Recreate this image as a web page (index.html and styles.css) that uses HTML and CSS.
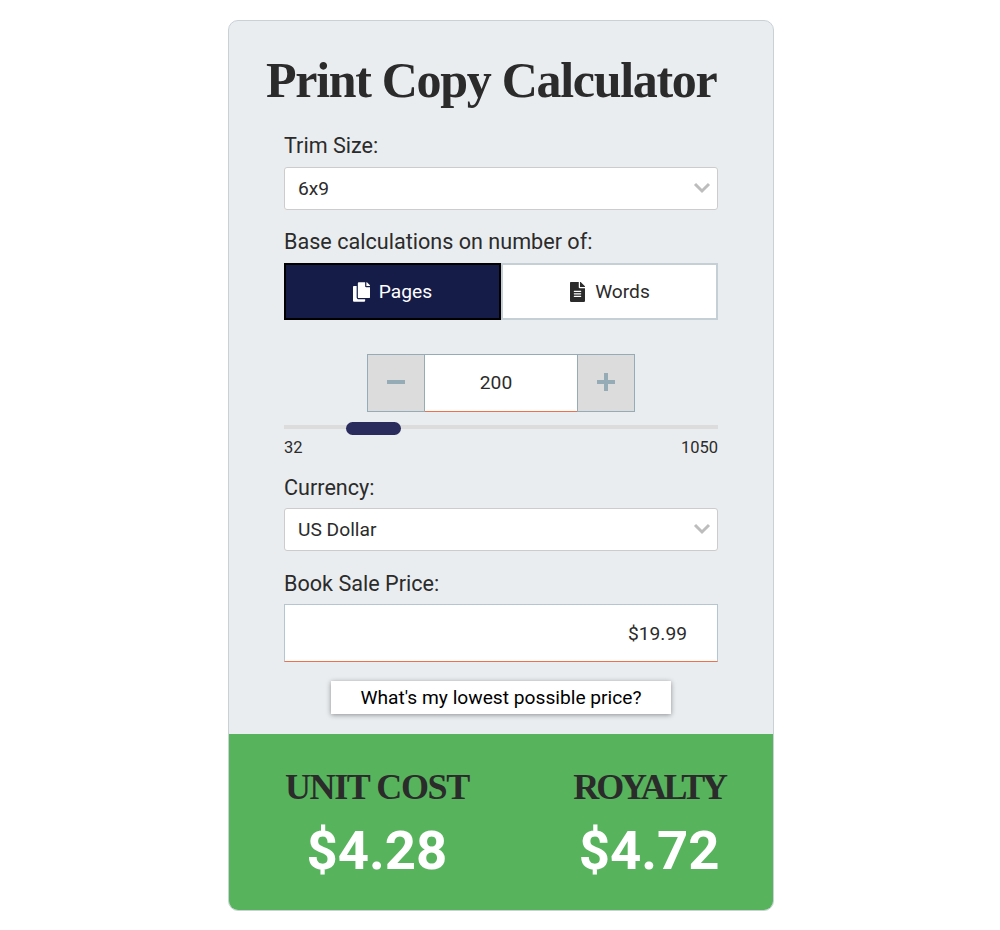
FILE: index.html
```html
<!DOCTYPE html>
<html lang="en">
  <head>
    <meta charset="UTF-8" />
    <meta name="viewport" content="width=device-width, initial-scale=1.0" />
    <title>Print Copy Calculator</title>
    <link rel="stylesheet" href="styles.css">
  </head>
  <body>
    <div class="calc">
      <div class="calc-form">
        <h1>Print Copy Calculator</h1>

        <label class="field-label" for="trim">Trim Size:</label>
        <div class="select-wrap">
          <select id="trim"><option>6x9</option></select>
          <svg class="chevron" viewBox="0 0 18 12"><path d="M2 2l7 7 7-7" /></svg>
        </div>

        <label class="field-label second">Base calculations on number of:</label>
        <div class="toggle">
          <button class="toggle-btn active">
            <svg class="icon" viewBox="0 0 448 512"><path d="M320 448v40c0 13.255-10.745 24-24 24H24c-13.255 0-24-10.745-24-24V120c0-13.255 10.745-24 24-24h72v296c0 30.879 25.121 56 56 56h168zm0-344V0H152c-13.255 0-24 10.745-24 24v368c0 13.255 10.745 24 24 24h272c13.255 0 24-10.745 24-24V128H344c-13.2 0-24-10.8-24-24zm120.971-31.029L375.029 7.029A24 24 0 0 0 358.059 0H352v96h96v-6.059a24 24 0 0 0-7.029-16.97z" /></svg>
            Pages
          </button>
          <button class="toggle-btn">
            <svg class="icon" viewBox="0 0 384 512"><path d="M224 136V0H24C10.7 0 0 10.7 0 24v464c0 13.3 10.7 24 24 24h336c13.3 0 24-10.7 24-24V160H248c-13.2 0-24-10.8-24-24zm64 236c0 6.6-5.4 12-12 12H108c-6.6 0-12-5.4-12-12v-8c0-6.6 5.4-12 12-12h168c6.6 0 12 5.4 12 12v8zm0-64c0 6.6-5.4 12-12 12H108c-6.6 0-12-5.4-12-12v-8c0-6.6 5.4-12 12-12h168c6.6 0 12 5.4 12 12v8zm0-72v8c0 6.6-5.4 12-12 12H108c-6.6 0-12-5.4-12-12v-8c0-6.6 5.4-12 12-12h168c6.6 0 12 5.4 12 12zm96-114.1v6.1H256V0h6.1c6.4 0 12.5 2.5 17 7l97.9 98c4.5 4.5 7 10.6 7 16.9z" /></svg>
            Words
          </button>
        </div>

        <div class="stepper">
          <button class="step-btn">
            <svg viewBox="0 0 18 18"><path d="M0 7h18v4H0z" /></svg>
          </button>
          <input class="step-input" type="text" value="200" />
          <button class="step-btn">
            <svg viewBox="0 0 18 18"><path d="M7 0h4v7h7v4h-7v7H7v-7H0V7h7z" /></svg>
          </button>
        </div>

        <input class="slider" type="range" min="32" max="1050" value="198" />
        <div class="slider-labels">
          <span>32</span>
          <span>1050</span>
        </div>

        <label class="field-label third" for="currency">Currency:</label>
        <div class="select-wrap">
          <select id="currency"><option>US Dollar</option></select>
          <svg class="chevron" viewBox="0 0 18 12"><path d="M2 2l7 7 7-7" /></svg>
        </div>

        <label class="field-label fourth" for="price">Book Sale Price:</label>
        <input class="price-input" id="price" type="text" value="$19.99" />

        <div class="lowest">
          <button class="lowest-btn">What's my lowest possible price?</button>
        </div>
      </div>

      <div class="calc-result">
        <div class="result-col">
          <h2>UNIT COST</h2>
          <p>$4.28</p>
        </div>
        <div class="result-col">
          <h2 class="tight">ROYALTY</h2>
          <p>$4.72</p>
        </div>
      </div>
    </div>
  </body>
</html>
```

FILE: styles.css
```css
* {
    margin: 0;
    padding: 0;
    box-sizing: border-box;
}

body {
    background-color: #fff;
    font-family: Roboto, Arial, sans-serif;
    color: #2b2b2b;
}

.calc {
    width: 546px;
    height: 891px;
    margin: 20px 0 0 228px;
    border: 1px solid #c9d1d6;
    border-radius: 10px;
    background-color: #eaedf0;
    overflow: hidden;
    display: flex;
    flex-direction: column;
}

.calc-form {
    height: 713px;
    padding: 0 55px;
}

h1 {
    font-family: "Liberation Serif", serif;
    font-size: 50px;
    font-weight: bold;
    line-height: 60px;
    letter-spacing: -1.3px;
    margin: 29px 0 0 -18px;
    white-space: nowrap;
}

.field-label {
    display: block;
    font-size: 21.6px;
    line-height: 24px;
    margin-top: 24px;
    margin-bottom: 9px;
}

.field-label.second {
    margin-top: 20px;
    margin-bottom: 9px;
}

.field-label.third {
    margin-top: 19px;
    margin-bottom: 8px;
}

.field-label.fourth {
    margin-top: 21px;
    margin-bottom: 8px;
}

.select-wrap {
    position: relative;
}

select {
    appearance: none;
    width: 100%;
    height: 43px;
    padding: 0 13px;
    border: 1px solid #ccc;
    border-radius: 3px;
    background-color: #fff;
    font-family: Roboto, Arial, sans-serif;
    font-size: 19.2px;
    color: #2b2b2b;
}

.chevron {
    position: absolute;
    top: 15px;
    right: 7px;
    width: 18px;
    height: 12px;
    fill: none;
    stroke: #bdbdbd;
    stroke-width: 3;
}

.toggle {
    display: flex;
}

.toggle-btn {
    flex: 1;
    height: 57px;
    border: 2px solid #c5d0d6;
    background-color: #fff;
    font-family: Roboto, Arial, sans-serif;
    font-size: 19.2px;
    color: #2b2b2b;
    display: flex;
    align-items: center;
    justify-content: center;
    gap: 9px;
}

.toggle-btn.active {
    background-color: #151c48;
    border-color: #000;
    color: #fff;
}

.icon {
    width: 17px;
    height: 20px;
    fill: currentColor;
}

.stepper {
    display: flex;
    justify-content: center;
    width: 268px;
    height: 58px;
    margin: 34px auto 0;
}

.step-btn {
    width: 58px;
    padding-bottom: 2px;
    border: 1px solid #95abb6;
    background-color: #dcdcdc;
    display: flex;
    align-items: center;
    justify-content: center;
}

.step-btn svg {
    width: 18px;
    height: 18px;
    fill: #95abb6;
}

.step-input {
    width: 152px;
    padding-right: 10px;
    padding-bottom: 2px;
    border: none;
    border-top: 1px solid #95abb6;
    border-bottom: 1px solid #f0704a;
    background-color: #fff;
    text-align: center;
    font-family: Roboto, Arial, sans-serif;
    font-size: 19.2px;
    color: #2b2b2b;
    outline: none;
}

.slider {
    appearance: none;
    display: block;
    width: 100%;
    height: 14px;
    margin: 8px 0 0;
    background: transparent;
    outline: none;
}

.slider::-webkit-slider-runnable-track {
    height: 4px;
    background-color: #dcdcdc;
}

.slider::-webkit-slider-thumb {
    appearance: none;
    width: 55px;
    height: 13px;
    margin-top: -3px;
    border-radius: 7px;
    background-color: #2b2c5e;
}

.slider-labels {
    display: flex;
    justify-content: space-between;
    font-size: 16.5px;
    line-height: 19px;
    margin-top: 4px;
}

.price-input {
    display: block;
    width: 100%;
    height: 58px;
    padding: 0 30px;
    border: 1px solid #b5c6d0;
    border-bottom-color: #f0704a;
    background-color: #fff;
    text-align: right;
    font-family: Roboto, Arial, sans-serif;
    font-size: 19.2px;
    color: #2b2b2b;
    outline: none;
}

.lowest {
    display: flex;
    justify-content: center;
    margin-top: 19px;
}

.lowest-btn {
    width: 340px;
    height: 33px;
    border: none;
    background-color: #fff;
    box-shadow: 0 1px 5px rgba(0, 0, 0, 0.4);
    font-family: Roboto, Arial, sans-serif;
    font-size: 19.2px;
    color: #000;
}

.calc-result {
    flex: 1;
    background-color: #57b45d;
    display: flex;
    justify-content: space-between;
    padding: 32px 48px 0 56px;
}

.result-col {
    text-align: center;
}

.result-col h2 {
    font-family: "Liberation Serif", serif;
    font-size: 36px;
    font-weight: bold;
    line-height: 42px;
    letter-spacing: -1.4px;
    color: #2b2b2b;
}

.result-col h2.tight {
    letter-spacing: -3.1px;
}

.result-col p {
    font-size: 54.5px;
    font-weight: bold;
    line-height: 64px;
    margin-top: 10px;
    color: #fff;
}
```
